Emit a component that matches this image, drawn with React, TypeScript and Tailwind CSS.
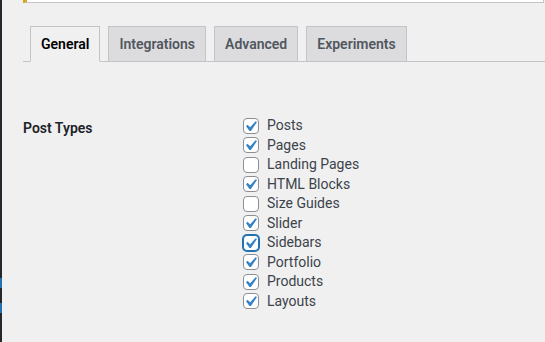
import React from "react";

const items: { label: string; checked: boolean; focus?: boolean }[] = [
  { label: "Posts", checked: true },
  { label: "Pages", checked: true },
  { label: "Landing Pages", checked: false },
  { label: "HTML Blocks", checked: true },
  { label: "Size Guides", checked: false },
  { label: "Slider", checked: true },
  { label: "Sidebars", checked: true, focus: true },
  { label: "Portfolio", checked: true },
  { label: "Products", checked: true },
  { label: "Layouts", checked: true },
];

function Check({ checked, focus }: { checked: boolean; focus?: boolean }) {
  return (
    <span
      className={
        "relative flex h-4 w-4 shrink-0 items-center justify-center rounded-[4px] bg-white " +
        (focus
          ? "border border-[#2271b1] shadow-[0_0_0_1px_#2271b1]"
          : "border border-[#8c8f94]")
      }
    >
      {checked && (
        <svg viewBox="0 0 20 20" className="absolute left-[-4px] top-[-3px] h-[21px] w-[21px]">
          <path d="M14.83 4.89l1.34.94-5.81 8.38H9.02L5.78 9.67l1.34-1.25 2.57 2.4z" fill="#3582c4" />
        </svg>
      )}
    </span>
  );
}

export default function App() {
  const tabs = ["General", "Integrations", "Advanced", "Experiments"];
  return (
    <div
      className="flex h-[342px] w-[545px] overflow-hidden bg-[#f0f0f1] text-[14px] text-[#3c434a]"
      style={{ fontFamily: "Roboto, 'Noto Sans', sans-serif" }}
    >
      <div className="flex w-[2px] shrink-0 flex-col bg-[#23282d]">
        <div className="h-[278px]" />
        <div className="h-[10px] bg-[#2271b1]" />
        <div className="h-[15px]" />
        <div className="h-[10px] bg-[#2271b1]" />
      </div>
      <div className="flex min-w-0 flex-1 flex-col pl-[21px]">
        <div className="mr-[1px] h-[3px] border-b border-l-4 border-r border-[#c3c4c7] border-l-[#dba617] bg-white" />
        <div className="mt-[23px] flex gap-[8px] border-b border-[#c3c4c7] pl-[7px]">
          {tabs.map((t, i) => (
            <div
              key={t}
              className={
                "-mb-px flex h-[36px] items-center border border-[#c3c4c7] px-[10px] font-semibold leading-none " +
                (i === 0
                  ? "border-b-[#f0f0f1] bg-[#f0f0f1] text-[#000]"
                  : "bg-[#dcdcde] text-[#50575e]")
              }
            >
              {t}
            </div>
          ))}
        </div>
        <div className="mt-[54px] flex">
          <div className="w-[220px] pt-[2px] font-semibold text-[#1d2327]">Post Types</div>
          <div className="flex flex-col">
            {items.map((it) => (
              <label key={it.label} className="flex h-[19.5px] items-center gap-[8px]">
                <Check checked={it.checked} focus={it.focus} />
                <span className="text-[#3c434a]">{it.label}</span>
              </label>
            ))}
          </div>
        </div>
      </div>
    </div>
  );
}
